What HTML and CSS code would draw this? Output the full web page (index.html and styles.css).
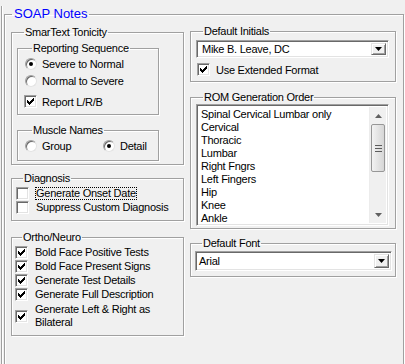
FILE: index.html
```html
<!DOCTYPE html>
<html lang="en">
<head>
    <meta charset="UTF-8">
    <title>SOAP Notes</title>
    <link rel="stylesheet" href="styles.css">
</head>
<body>
    <div class="frame">
        <fieldset class="soap">
            <legend>SOAP Notes</legend>
            <div class="cols">
                <div class="col-left">
                    <fieldset class="grp smartext">
                        <legend>SmarText Tonicity</legend>
                        <fieldset class="grp sub reporting">
                            <legend>Reporting Sequence</legend>
                            <div class="row"><span class="radio on"></span><span>Severe to Normal</span></div>
                            <div class="row"><span class="radio"></span><span>Normal to Severe</span></div>
                            <div class="row report"><span class="check on"></span><span>Report L/R/B</span></div>
                        </fieldset>
                        <fieldset class="grp sub muscle">
                            <legend>Muscle Names</legend>
                            <div class="row">
                                <span class="radio"></span><span class="opt-group">Group</span>
                                <span class="radio on"></span><span>Detail</span>
                            </div>
                        </fieldset>
                    </fieldset>

                    <fieldset class="grp diagnosis">
                        <legend>Diagnosis</legend>
                        <div class="row"><span class="check"></span><span class="focus">Generate Onset Date</span></div>
                        <div class="row"><span class="check"></span><span>Suppress Custom Diagnosis</span></div>
                    </fieldset>

                    <fieldset class="grp ortho">
                        <legend>Ortho/Neuro</legend>
                        <div class="row"><span class="check on"></span><span>Bold Face Positive Tests</span></div>
                        <div class="row"><span class="check on"></span><span>Bold Face Present Signs</span></div>
                        <div class="row"><span class="check on"></span><span>Generate Test Details</span></div>
                        <div class="row"><span class="check on"></span><span>Generate Full Description</span></div>
                        <div class="row two"><span class="check on"></span><span>Generate Left &amp; Right as<br>Bilateral</span></div>
                    </fieldset>
                </div>

                <div class="col-right">
                    <fieldset class="grp initials">
                        <legend>Default Initials</legend>
                        <div class="combo">
                            <span class="combo-text">Mike B. Leave, DC</span>
                            <span class="drop"><svg width="7" height="4" viewBox="0 0 7 4"><path d="M0 0h7L3.5 4z" fill="#000"/></svg></span>
                        </div>
                        <div class="row ext"><span class="check on"></span><span>Use Extended Format</span></div>
                    </fieldset>

                    <fieldset class="grp rom">
                        <legend>ROM Generation Order</legend>
                        <div class="listbox">
                            <ul class="items">
                                <li>Spinal Cervical Lumbar only</li>
                                <li>Cervical</li>
                                <li>Thoracic</li>
                                <li>Lumbar</li>
                                <li>Right Fngrs</li>
                                <li>Left Fingers</li>
                                <li>Hip</li>
                                <li>Knee</li>
                                <li>Ankle</li>
                            </ul>
                            <div class="vscroll">
                                <span class="arrow"><svg width="7" height="4" viewBox="0 0 7 4"><path d="M3.5 0L7 4H0z" fill="#606060"/></svg></span>
                                <span class="thumb"><i></i><i></i><i></i></span>
                                <span class="track"></span>
                                <span class="arrow"><svg width="7" height="4" viewBox="0 0 7 4"><path d="M0 0h7L3.5 4z" fill="#606060"/></svg></span>
                            </div>
                        </div>
                    </fieldset>

                    <fieldset class="grp font">
                        <legend>Default Font</legend>
                        <div class="combo tall">
                            <span class="combo-text">Arial</span>
                            <span class="drop"><svg width="7" height="4" viewBox="0 0 7 4"><path d="M0 0h7L3.5 4z" fill="#000"/></svg></span>
                        </div>
                    </fieldset>
                </div>
            </div>
        </fieldset>
    </div>
</body>
</html>
```

FILE: styles.css
```css
*{
    box-sizing: border-box;
    margin: 0;
    padding: 0;
}
html, body{
    width: 405px;
    height: 364px;
    overflow: hidden;
}
body{
    background-color: #f0f0f0;
    font-family: "Liberation Sans", Arial, sans-serif;
    font-size: 11px;
    letter-spacing: -0.25px;
    color: #000;
}
.frame{
    height: 364px;
    margin-left: 1px;
    padding-left: 2px;
    border-left: 1px solid #a0a0a0;
    box-shadow: inset 1px 0 0 #fff;
}

/* group boxes */
fieldset{
    border: 1px solid #a0a0a0;
    box-shadow: inset 1px 1px 0 #fff, 1px 1px 0 #fff;
    min-width: 0;
}
legend{
    line-height: 14px;
    padding: 0 1px;
    margin-left: 7px;
}
.soap{
    width: 400px;
    height: 380px;
    margin-top: 6px;
}
.soap > legend{
    font-size: 13px;
    letter-spacing: 0;
    color: #0000ff;
    line-height: 16px;
    margin-left: 7px;
    padding: 0 2px;
}
.cols{
    display: flex;
    gap: 6px;
    padding: 3px 7px 0 6px;
}
.col-left{
    width: 173px;
}
.col-right{
    width: 206px;
    margin-top: -1px;
}

/* rows with a box and a caption */
.row{
    display: flex;
    align-items: center;
    gap: 6px;
    height: 17px;
    white-space: nowrap;
}
.radio{
    position: relative;
    flex: none;
    width: 12px;
    height: 12px;
    border-radius: 50%;
    background-color: #fff;
    border: 1px solid;
    border-color: #a0a0a0 #e3e3e3 #e3e3e3 #a0a0a0;
    box-shadow: inset 1px 1px 0 #696969;
}
.radio.on::after{
    content: "";
    position: absolute;
    left: 3px;
    top: 3px;
    width: 4px;
    height: 4px;
    border-radius: 50%;
    background-color: #000;
}
.check{
    position: relative;
    flex: none;
    width: 13px;
    height: 13px;
    background-color: #fff;
    border: 1px solid;
    border-color: #a0a0a0 #fff #fff #a0a0a0;
    box-shadow: inset 1px 1px 0 #696969, inset -1px -1px 0 #e3e3e3;
}
.check.on::after{
    content: "";
    position: absolute;
    left: 2px;
    top: 2px;
    width: 7px;
    height: 7px;
    background: url("data:image/svg+xml,%3Csvg xmlns='http://www.w3.org/2000/svg' width='7' height='7'%3E%3Cpath d='M0 2h1v1h1v1h1V3h1V2h1V1h1V0h1v3H6v1H5v1H4v1H3v1H2V6H1V5H0z' fill='%23000'/%3E%3C/svg%3E") no-repeat;
}

/* SmarText Tonicity */
.smartext{
    height: 140px;
    padding: 2px 0 0 5px;
}
.sub{
    width: 142px;
}
.reporting{
    height: 74px;
    padding-left: 7px;
}
.reporting .row{
    gap: 5px;
}
.reporting .row.report{
    margin-top: 4px;
}
.reporting .report .check{
    margin-left: -1px;
}
.muscle{
    height: 38px;
    margin-top: 8px;
    padding-left: 7px;
}
.muscle .row{
    gap: 5px;
}
.opt-group{
    width: 56px;
}

/* Diagnosis */
.diagnosis{
    height: 50px;
    margin-top: 6px;
    padding: 1px 0 0 4px;
}
.diagnosis .row{
    height: 14px;
    gap: 7px;
}
.focus{
    outline: 1px dotted #000;
    line-height: 11px;
}

/* Ortho/Neuro */
.ortho{
    height: 106px;
    margin-top: 9px;
    padding: 1px 0 0 3px;
}
.ortho .row{
    height: 14px;
    gap: 7px;
}
.ortho .row.two{
    height: 30px;
    line-height: 13px;
}

/* right column */
.initials{
    height: 58px;
    padding: 2px 6px 0 5px;
}
.combo{
    display: flex;
    align-items: center;
    height: 18px;
    background-color: #fff;
    border: 1px solid;
    border-color: #a0a0a0 #fff #fff #a0a0a0;
    box-shadow: inset 1px 1px 0 #696969, inset -1px -1px 0 #e3e3e3;
    padding: 2px;
}
.combo.tall{
    height: 20px;
}
.combo-text{
    flex: 1;
    padding-left: 3px;
    line-height: 13px;
}
.drop{
    display: flex;
    align-items: center;
    justify-content: center;
    width: 15px;
    height: 100%;
    background-color: #f0f0f0;
    border: 1px solid;
    border-color: #e3e3e3 #696969 #696969 #e3e3e3;
    box-shadow: inset 1px 1px 0 #fff, inset -1px -1px 0 #a0a0a0;
}
.ext{
    margin-top: 3px;
    padding-left: 1px;
    gap: 6px;
}
.rom{
    height: 139px;
    margin-top: 8px;
    padding: 0 6px 0 5px;
}
.listbox{
    display: flex;
    height: 122px;
    background-color: #fff;
    border: 1px solid;
    border-color: #a0a0a0 #fff #fff #a0a0a0;
    box-shadow: inset 1px 1px 0 #696969, inset -1px -1px 0 #e3e3e3;
    padding: 2px;
    overflow: hidden;
}
.items{
    flex: 1;
    list-style: none;
    padding: 1px 0 0 2px;
    overflow: hidden;
}
.items li{
    height: 13px;
    line-height: 13px;
    white-space: nowrap;
}
.vscroll{
    display: flex;
    flex-direction: column;
    width: 17px;
    background-color: #f0f0f0;
    border-left: 1px solid #ececec;
}
.vscroll .arrow{
    display: flex;
    align-items: center;
    justify-content: center;
    height: 17px;
}
.thumb{
    display: flex;
    flex-direction: column;
    align-items: center;
    justify-content: center;
    gap: 2px;
    height: 48px;
    margin: 0 1px;
    border: 1px solid #979797;
    border-radius: 2px;
    background: linear-gradient(to right, #f3f3f3, #e4e4e4 50%, #d6d6d6);
}
.thumb i{
    display: block;
    width: 7px;
    height: 1px;
    background-color: #5c5c5c;
}
.track{
    flex: 1;
}
.font{
    height: 41px;
    margin-top: 7px;
    padding: 1px 3px 0 4px;
}
.font .combo-text{
    padding-left: 1px;
}
```
